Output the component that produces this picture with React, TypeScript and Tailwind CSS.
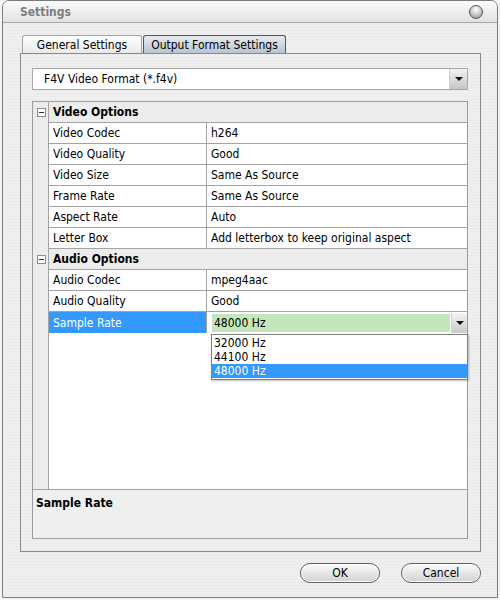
import React from 'react';

type Row =
  | { kind: 'group'; label: string }
  | { kind: 'prop'; name: string; value: string; editing?: boolean };

const rows: Row[] = [
  { kind: 'group', label: 'Video Options' },
  { kind: 'prop', name: 'Video Codec', value: 'h264' },
  { kind: 'prop', name: 'Video Quality', value: 'Good' },
  { kind: 'prop', name: 'Video Size', value: 'Same As Source' },
  { kind: 'prop', name: 'Frame Rate', value: 'Same As Source' },
  { kind: 'prop', name: 'Aspect Rate', value: 'Auto' },
  { kind: 'prop', name: 'Letter Box', value: 'Add letterbox to keep original aspect' },
  { kind: 'group', label: 'Audio Options' },
  { kind: 'prop', name: 'Audio Codec', value: 'mpeg4aac' },
  { kind: 'prop', name: 'Audio Quality', value: 'Good' },
  { kind: 'prop', name: 'Sample Rate', value: '48000 Hz', editing: true },
];

const rates = ['32000 Hz', '44100 Hz', '48000 Hz'];

function Arrow() {
  return <div className="w-0 h-0 border-l-[4px] border-r-[4px] border-t-[4px] border-l-transparent border-r-transparent border-t-[#111]" />;
}

function MinusBox() {
  return (
    <div className="w-[9px] h-[9px] border border-[#8c8c8c] bg-white flex items-center justify-center">
      <div className="w-[5px] h-px bg-[#333]" />
    </div>
  );
}

function PropRow({ row }: { row: Row }) {
  if (row.kind === 'group') {
    return (
      <div className="h-[21px] flex">
        <div className="w-[16px] shrink-0 flex items-center justify-center">
          <MinusBox />
        </div>
        <div className="flex-1 flex items-center pl-[4px] bg-[#ececec] border-b border-[#a3a3a3] font-bold">
          {row.label}
        </div>
      </div>
    );
  }
  return (
    <div className="h-[21px] flex">
      <div className="w-[16px] shrink-0" />
      <div
        className={`w-[158px] shrink-0 flex items-center pl-[4px] border-r border-[#a3a3a3] ${
          row.editing ? 'bg-[#3399ff] text-white' : 'border-b'
        }`}
      >
        {row.name}
      </div>
      {row.editing ? (
        <div className="flex-1 relative flex items-stretch pl-[4px] pt-px">
          <div className="flex-1 bg-[#c4e6bc] border border-white flex items-center pl-[2px]">{row.value}</div>
          <div className="w-[16px] bg-[linear-gradient(to_bottom,#f4f4f4,#c9c9c9)] border-l border-[#d0d0d0] flex items-center justify-center">
            <Arrow />
          </div>
          <div className="absolute left-[4px] right-[-1px] top-[22px] bg-white border border-[#7d7d7d] py-px shadow-[1px_1px_2px_rgba(0,0,0,0.25)] z-10">
            {rates.map((r, i) => (
              <div
                key={r}
                className={`h-[14px] leading-[14px] pl-[2px] ${i === 2 ? 'bg-[#3399ff] text-white' : ''}`}
              >
                {r}
              </div>
            ))}
          </div>
        </div>
      ) : (
        <div className="flex-1 flex items-center pl-[4px] border-b border-[#a3a3a3]">{row.value}</div>
      )}
    </div>
  );
}

export default function App() {
  return (
    <div
      className="w-[500px] h-[600px] bg-[#f4f4f4] overflow-hidden text-[12px] text-black"
      style={{ fontFamily: '"DejaVu Sans Condensed", "DejaVu Sans", Tahoma, sans-serif' }}
    >
      <div className="ml-[2px] w-[496px] h-[598px] border border-[#7c7c7c] rounded-t-[7px] flex flex-col bg-[repeating-linear-gradient(0deg,#efefef_0px,#efefef_2px,#ebebeb_2px,#ebebeb_3px)]">
        {/* title bar */}
        <div className="h-[22px] shrink-0 flex items-center justify-between pl-[17px] pr-[14px] rounded-t-[6px] border-b border-[#a8a8a8] bg-[linear-gradient(to_bottom,#fbfbfb,#e2e2e2)]">
          <span className="font-bold text-[12px] text-[#7d7d7d]">Settings</span>
          <div className="w-[14px] h-[14px] rounded-full border border-[#555] bg-[radial-gradient(circle_at_50%_30%,#ffffff,#c4c4c4_55%,#8e8e8e)]" />
        </div>

        <div className="pl-[17px] pr-[16px] pt-[12px] flex flex-col">
          {/* tabs */}
          <div className="flex h-[18px] pl-[2px]">
            <div className="w-[120px] flex items-center justify-center border border-b-0 border-[#a2a2a2] rounded-t-[3px] bg-[linear-gradient(to_bottom,#ffffff,#e9e9e9)]">
              General Settings
            </div>
            <div className="w-[143px] ml-px flex items-center justify-center border border-b-0 border-[#4f565e] rounded-t-[3px] bg-[linear-gradient(to_bottom,#e6ebf0,#b9c4cf)]">
              Output Format Settings
            </div>
          </div>

          {/* panel */}
          <div className="h-[499px] border border-[#8a8a8a] flex flex-col pt-[14px] pl-[11px]">
            <div className="w-[436px] h-[22px] bg-white border border-[#a8a8a8] flex items-center">
              <span className="flex-1 pl-[11px]">F4V Video Format (*.f4v)</span>
              <div className="w-[18px] h-full border-l border-[#cfcfcf] bg-[linear-gradient(to_bottom,#f2f2f2,#c6c6c6)] flex items-center justify-center">
                <Arrow />
              </div>
            </div>

            <div className="mt-[11px] w-[436px] h-[438px] border border-[#9c9c9c] flex flex-col">
              <div className="flex-1 flex flex-col bg-[linear-gradient(to_right,#ececec_15px,#a3a3a3_15px,#a3a3a3_16px,#ffffff_16px)]">
                {rows.map((row, i) => (
                  <PropRow key={i} row={row} />
                ))}
              </div>
              <div className="h-[49px] shrink-0 border-t border-[#a3a3a3] bg-[#efefef] pl-[3px] pt-[4px] font-bold">
                Sample Rate
              </div>
            </div>
          </div>

          {/* buttons */}
          <div className="mt-[11px] flex justify-end gap-[21px]">
            {['OK', 'Cancel'].map((b) => (
              <div
                key={b}
                className="w-[80px] h-[20px] rounded-full border border-[#5f5f5f] bg-[linear-gradient(to_bottom,#fdfdfd,#e6e6e6_50%,#d2d2d2)] shadow-[inset_0_0_0_1px_#ffffff] flex items-center justify-center"
              >
                {b}
              </div>
            ))}
          </div>
        </div>
      </div>
    </div>
  );
}
